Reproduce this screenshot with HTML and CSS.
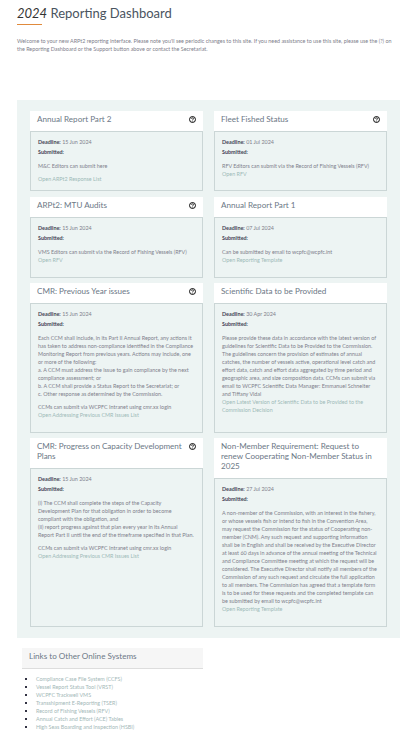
FILE: index.html
```html
<!DOCTYPE html>
<html>
<head>
    <title>Reporting Dashboard</title>
    <link rel="stylesheet" href="styles.css">
</head>
<body>
    <svg class="defs" width="0" height="0">
        <symbol id="help-icon" viewBox="0 0 8 8">
            <circle cx="4" cy="4" r="3.4" fill="#fff" stroke="#000" stroke-width="1.1"/>
            <path d="M2.9 3.1 C2.9 1.7 5.1 1.7 5.1 3.1 C5.1 4 4 4 4 4.9 M4 5.5 V6.3" fill="none" stroke="#000" stroke-width="0.9"/>
        </symbol>
    </svg>

    <h1><em>2024</em> Reporting Dashboard</h1>
    <div class="rule"></div>
    <p class="welcome">Welcome to your new ARPt2 reporting interface. Please note you'll see periodic changes to this site. If you need assistance to use this site, please use the (?) on the Reporting Dashboard or the Support button above or contact the Secretariat.</p>

    <div class="panel">
        <div class="card">
            <div class="card-head"><h2>Annual Report Part 2</h2><svg class="help"><use href="#help-icon"/></svg></div>
            <div class="card-body tight">
                <p class="meta"><b>Deadline:</b> 15 Jun 2024</p>
                <p class="meta"><b>Submitted:</b></p>
                <p class="text">M&amp;C Editors can submit here</p>
                <a class="link gap">Open ARPt2 Response List</a>
            </div>
        </div>
        <div class="card">
            <div class="card-head"><h2>Fleet Fished Status</h2><svg class="help"><use href="#help-icon"/></svg></div>
            <div class="card-body tight">
                <p class="meta"><b>Deadline:</b> 01 Jul 2024</p>
                <p class="meta"><b>Submitted:</b></p>
                <p class="text">RFV Editors can submit via the Record of Fishing Vessels (RFV)</p>
                <a class="link">Open RFV</a>
            </div>
        </div>

        <div class="card">
            <div class="card-head"><h2>ARPt2: MTU Audits</h2><svg class="help"><use href="#help-icon"/></svg></div>
            <div class="card-body">
                <p class="meta"><b>Deadline:</b> 15 Jun 2024</p>
                <p class="meta"><b>Submitted:</b></p>
                <p class="text">VMS Editors can submit via the Record of Fishing Vessels (RFV)</p>
                <a class="link">Open RFV</a>
            </div>
        </div>
        <div class="card">
            <div class="card-head"><h2>Annual Report Part 1</h2></div>
            <div class="card-body">
                <p class="meta"><b>Deadline:</b> 07 Jul 2024</p>
                <p class="meta"><b>Submitted:</b></p>
                <p class="text">Can be submitted by email to wcpfc@wcpfc.int</p>
                <a class="link">Open Reporting Template</a>
            </div>
        </div>

        <div class="card">
            <div class="card-head"><h2>CMR: Previous Year issues</h2><svg class="help"><use href="#help-icon"/></svg></div>
            <div class="card-body">
                <p class="meta"><b>Deadline:</b> 15 Jun 2024</p>
                <p class="meta"><b>Submitted:</b></p>
                <p class="text">Each CCM shall include, in its Part II Annual Report, any actions it<br>has taken to address non-compliance identified in the Compliance<br>Monitoring Report from previous years. Actions may include, one<br>or more of the following:<br>a. A CCM must address the issue to gain compliance by the next<br>compliance assessment; or<br>b. A CCM shall provide a Status Report to the Secretariat; or<br>c. Other response as determined by the Commission.</p>
                <p class="text">CCMs can submit via WCPFC Intranet using cmr.xx login</p>
                <a class="link">Open Addressing Previous CMR Issues List</a>
            </div>
        </div>
        <div class="card">
            <div class="card-head"><h2>Scientific Data to be Provided</h2></div>
            <div class="card-body">
                <p class="meta"><b>Deadline:</b> 30 Apr 2024</p>
                <p class="meta"><b>Submitted:</b></p>
                <p class="text">Please provide these data in accordance with the latest version of<br>guidelines for Scientific Data to be Provided to the Commission.<br>The guidelines concern the provision of estimates of annual<br>catches, the number of vessels active, operational level catch and<br>effort data, catch and effort data aggregated by time period and<br>geographic area, and size composition data. CCMs can submit via<br>email to WCPFC Scientific Data Manager: Emmanuel Schneiter<br>and Tiffany Vidal</p>
                <a class="link">Open Latest Version of Scientific Data to be Provided to the<br>Commission Decision</a>
            </div>
        </div>

        <div class="card">
            <div class="card-head"><h2 class="snug">CMR: Progress on Capacity Development<br>Plans</h2><svg class="help"><use href="#help-icon"/></svg></div>
            <div class="card-body">
                <p class="meta"><b>Deadline:</b> 15 Jun 2024</p>
                <p class="meta"><b>Submitted:</b></p>
                <p class="text">(i) The CCM shall complete the steps of the Capacity<br>Development Plan for that obligation in order to become<br>compliant with the obligation, and<br>(ii) report progress against that plan every year in its Annual<br>Report Part II until the end of the timeframe specified in that Plan.</p>
                <p class="text">CCMs can submit via WCPFC Intranet using cmr.xx login</p>
                <a class="link">Open Addressing Previous CMR Issues List</a>
            </div>
        </div>
        <div class="card">
            <div class="card-head"><h2>Non-Member Requirement: Request to<br>renew Cooperating Non-Member Status in<br>2025</h2></div>
            <div class="card-body">
                <p class="meta"><b>Deadline:</b> 27 Jul 2024</p>
                <p class="meta"><b>Submitted:</b></p>
                <p class="text">A non-member of the Commission, with an interest in the fishery,<br>or whose vessels fish or intend to fish in the Convention Area,<br>may request the Commission for the status of Cooperating non-<br>member (CNM). Any such request and supporting information<br>shall be in English and shall be received by the Executive Director<br>at least 60 days in advance of the annual meeting of the Technical<br>and Compliance Committee meeting at which the request will be<br>considered. The Executive Director shall notify all members of the<br>Commission of any such request and circulate the full application<br>to all members. The Commission has agreed that a template form<br>is to be used for these requests and the completed template can<br>be submitted by email to wcpfc@wcpfc.int</p>
                <a class="link">Open Reporting Template</a>
            </div>
        </div>
    </div>

    <div class="systems">
        <div class="systems-head">Links to Other Online Systems</div>
        <ul>
            <li><a>Compliance Case File System (CCFS)</a></li>
            <li><a>Vessel Report Status Tool (VRST)</a></li>
            <li><a>WCPFC Trackwell VMS</a></li>
            <li><a>Transshipment E-Reporting (TSER)</a></li>
            <li><a>Record of Fishing Vessels (RFV)</a></li>
            <li><a>Annual Catch and Effort (ACE) Tables</a></li>
            <li><a>High Seas Boarding and Inspection (HSBI)</a></li>
        </ul>
    </div>
</body>
</html>
```

FILE: styles.css
```css
body {
    font-family: Lato, "Open Sans", sans-serif;
    background-color: #fff;
    color: #667;
    margin: 0;
    height: 732px;
    overflow: hidden;
}

p {
    margin: 0;
}

.defs {
    display: block;
    height: 0;
}

h1 {
    font-size: 13px;
    font-weight: 400;
    line-height: 18px;
    color: #4a5460;
    margin: 0 0 0 17px;
    padding-top: 4px;
}

h1 em {
    color: #333;
}

.rule {
    width: 25px;
    height: 1px;
    background-color: #e08a3c;
    margin: 2px 0 0 17px;
}

.welcome {
    font-size: 5.4px;
    line-height: 8px;
    color: #80808c;
    margin: 12px 18px 0 17px;
}

.panel {
    display: grid;
    grid-template-columns: 173px 173px;
    column-gap: 11px;
    row-gap: 5px;
    background-color: #edf4f3;
    margin: 47px 16px 0 17px;
    padding: 11px 13px;
}

.card {
    display: flex;
    flex-direction: column;
}

.card-head {
    display: flex;
    justify-content: space-between;
    align-items: flex-start;
    background-color: #fff;
    padding: 3px 7px 7px 7px;
}

.card-head h2 {
    font-size: 8.1px;
    font-weight: 400;
    line-height: 10px;
    color: #6c7886;
    margin: 0;
}

.card-head h2.snug {
    letter-spacing: -0.05px;
}

.help {
    flex: none;
    width: 7px;
    height: 7px;
    margin: 2px 0 0 2px;
    position: relative;
    z-index: 1;
}

.card-body {
    flex: 1;
    border: 1px solid #cbd6d6;
    padding: 5px 7px 13px 7px;
    font-size: 5.4px;
    line-height: 8px;
}

.card-body.tight {
    padding-bottom: 7px;
    margin-bottom: 1px;
}

.meta {
    line-height: 10px;
    color: #80808c;
}

.meta b {
    color: #445;
}

.text {
    color: #80808c;
    margin-top: 5px;
}

.link {
    display: block;
    color: #9dbab8;
}

.gap {
    margin-top: 5px;
}

.systems {
    width: 181px;
    margin: 10px 0 0 22px;
}

.systems-head {
    background-color: #f6f6f6;
    border-bottom: 1px solid #ddd;
    font-size: 8.1px;
    line-height: 10px;
    color: #6c7886;
    padding: 3px 7px 7px 7px;
}

.systems ul {
    list-style: none;
    margin: 6px 0 0 0;
    padding: 0;
    font-size: 5.4px;
    line-height: 8px;
}

.systems li {
    display: flex;
    align-items: center;
    padding-left: 3px;
}

.systems li::before {
    content: "";
    width: 2px;
    height: 2px;
    background-color: #334;
    margin-right: 9px;
}

.systems a {
    color: #a3b8b8;
}
```
